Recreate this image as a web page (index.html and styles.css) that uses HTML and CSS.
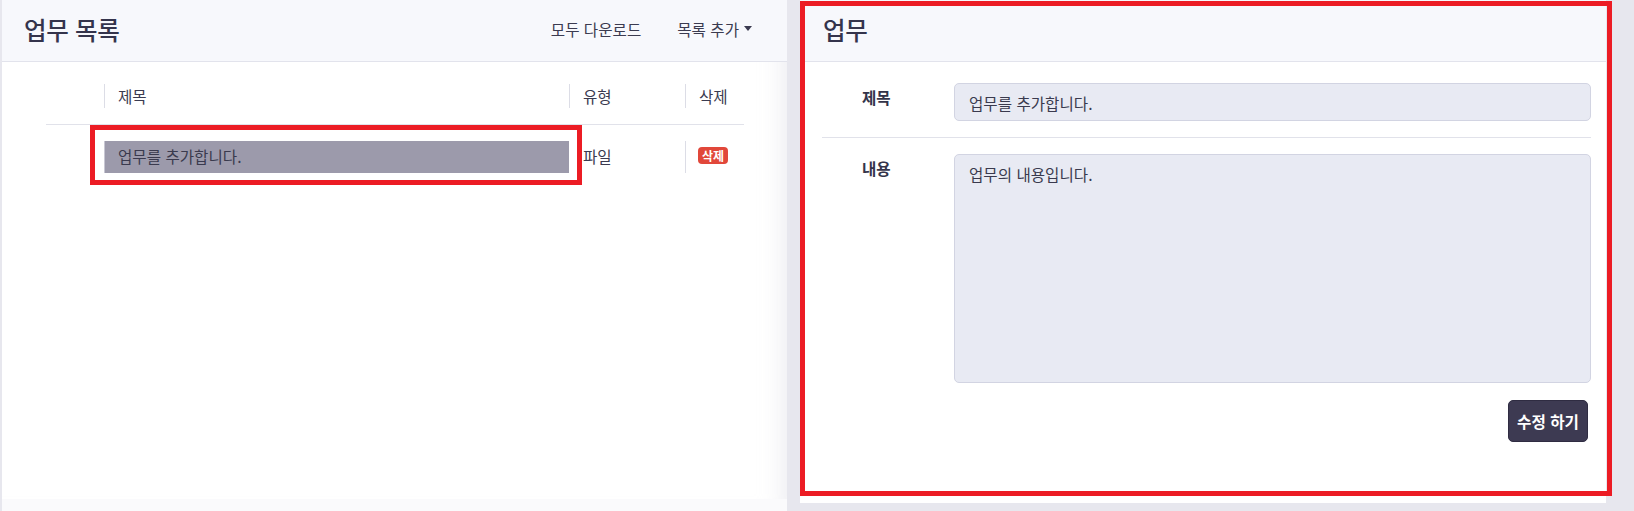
FILE: index.html
```html
<!DOCTYPE html>
<html lang="ko">
<head>
<meta charset="utf-8">
<title>업무 목록</title>
<link rel="stylesheet" href="styles.css">
</head>
<body>
<div class="page">
  <div class="col-left">
    <section class="card list-card">
      <header class="card-head">
        <h1 class="card-title">업무 목록</h1>
        <nav class="head-actions">
          <span class="action">모두 다운로드</span>
          <span class="action">목록 추가<span class="caret"></span></span>
        </nav>
      </header>
      <div class="card-body list-body">
        <div class="grid">
          <div class="th empty"></div>
          <div class="th"><span class="th-in">제목</span></div>
          <div class="th"><span class="th-in">유형</span></div>
          <div class="th"><span class="th-in">삭제</span></div>

          <div class="td empty"></div>
          <div class="td"><div class="title-bar">업무를 추가합니다.</div></div>
          <div class="td"><span class="plain">파일</span></div>
          <div class="td"><div class="del-cell"><span class="badge">삭제</span></div></div>
        </div>
        <div class="mark mark-row"></div>
      </div>
    </section>
    <div class="below-left"></div>
  </div>

  <section class="card detail-card">
    <header class="card-head">
      <h1 class="card-title">업무</h1>
    </header>
    <div class="card-body detail-body">
      <div class="form-row first">
        <label class="label">제목</label>
        <div class="field input">업무를 추가합니다.</div>
      </div>
      <div class="form-row">
        <label class="label">내용</label>
        <div class="field textarea">업무의 내용입니다.</div>
      </div>
      <div class="btn-row">
        <button class="btn">수정 하기</button>
      </div>
    </div>
  </section>
  <div class="mark mark-detail"></div>
</div>
</body>
</html>
```

FILE: styles.css
```css
* { box-sizing: border-box; }

html, body {
  margin: 0;
  padding: 0;
}

body {
  background: #e7e7ee;
  font-family: "Noto Sans CJK KR", "Noto Sans", sans-serif;
  color: #3b3b50;
  width: 1634px;
  height: 511px;
  overflow: hidden;
}

.page {
  position: relative;
  display: flex;
  align-items: flex-start;
  gap: 13px;
  padding-left: 2px;
  height: 511px;
}

.col-left {
  width: 785px;
  height: 511px;
  display: flex;
  flex-direction: column;
}

.below-left {
  flex: 1;
  background: #fafafc;
}

.card {
  background: #ffffff;
  display: flex;
  flex-direction: column;
}

.list-card {
  height: 499px;
  box-shadow: inset -28px 0 24px -24px rgba(200, 200, 215, 0.35);
}

.detail-card {
  width: 806px;
  height: 503px;
}

.card-head {
  height: 62px;
  background: #f7f8fc;
  border-bottom: 1px solid #e2e3ec;
  display: flex;
  align-items: center;
  justify-content: space-between;
  padding: 0 35px 0 22px;
  flex-shrink: 0;
}

.detail-card .card-head {
  padding-left: 23px;
}

.card-title {
  margin: 0;
  font-size: 24.5px;
  font-weight: 500;
  color: #34344c;
  letter-spacing: -0.3px;
  padding-bottom: 3px;
}

.head-actions {
  display: flex;
  gap: 36px;
  font-size: 15.6px;
  color: #3b3b50;
  padding-bottom: 4px;
}

.action {
  display: inline-flex;
  align-items: center;
}

.caret {
  display: inline-block;
  width: 0;
  height: 0;
  margin-left: 5px;
  border-left: 4px solid transparent;
  border-right: 4px solid transparent;
  border-top: 5px solid #3b3b50;
}

/* list table */
.list-body {
  position: relative;
  padding: 22px 0 0 44px;
}

.grid {
  display: grid;
  grid-template-columns: 58px 465px 116px 59px;
  width: 698px;
}

.th {
  border-bottom: 1px solid #e1e2ea;
  padding-bottom: 16px;
  font-size: 15.6px;
}

.th-in {
  display: block;
  height: 24px;
  line-height: 24px;
  border-left: 1px solid #dcdde6;
  padding-left: 13px;
}

.td {
  padding-top: 16px;
  font-size: 15.6px;
}

.title-bar {
  height: 32px;
  line-height: 31px;
  background: #9c9aab;
  border-left: 1px solid #c8c7d3;
  padding-left: 13px;
  color: #3a3a4e;
}

.plain {
  display: block;
  height: 32px;
  line-height: 30px;
  padding-left: 14px;
}

.del-cell {
  height: 32px;
  border-left: 1px solid #dcdde6;
  padding-left: 12px;
  display: flex;
  align-items: center;
}

.badge {
  display: inline-block;
  background: #e1473a;
  color: #ffffff;
  font-size: 12px;
  font-weight: 700;
  line-height: 17px;
  height: 17px;
  padding: 0 4px;
  border-radius: 4px;
  margin-bottom: 4px;
}

/* detail form */
.detail-body {
  padding: 21px 15px 0 22px;
}

.form-row {
  display: flex;
  align-items: flex-start;
}

.form-row.first {
  padding-bottom: 16px;
  border-bottom: 1px solid #e1e2ea;
  margin-bottom: 16px;
}

.label {
  width: 132px;
  padding: 3px 0 0 40px;
  font-size: 15.6px;
  line-height: 22px;
  font-weight: 600;
  color: #34344a;
}

.field {
  flex: 1;
  background: #e8eaf3;
  border: 1px solid #d2d4e2;
  border-radius: 5px;
  font-size: 15.6px;
  color: #3a3a4e;
  padding: 0 14px;
}

.input {
  height: 38px;
  line-height: 38px;
}

.textarea {
  height: 229px;
  padding-top: 8px;
  line-height: 22px;
}

.btn-row {
  display: flex;
  justify-content: flex-end;
  padding: 17px 3px 0 0;
}

.btn {
  width: 80px;
  height: 42px;
  background: #3d3a52;
  color: #ffffff;
  border: 1px solid #2f2c42;
  border-radius: 5px;
  font-family: inherit;
  font-size: 15.6px;
  font-weight: 700;
  padding: 0;
}

/* red annotation boxes */
.mark {
  position: absolute;
  border: 5px solid #ec1c24;
  pointer-events: none;
}

.mark-row {
  left: 88px;
  top: 63px;
  width: 492px;
  height: 60px;
}

.mark-detail {
  left: 800px;
  top: 1px;
  width: 812px;
  height: 495px;
}
```
